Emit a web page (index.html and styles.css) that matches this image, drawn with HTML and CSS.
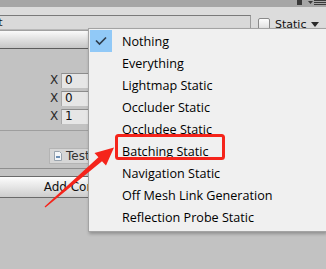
FILE: index.html
```html
<!DOCTYPE html>
<html lang="en">
<head>
    <meta charset="UTF-8">
    <title>Inspector - Static flags</title>
    <link rel="stylesheet" href="styles.css">
</head>
<body>
    <div class="inspector">
        <div class="tabbar">
            <svg class="tab-icons" width="29" height="6" viewBox="0 0 29 6">
                <rect x="0" y="0" width="5" height="5" fill="#3a3a3a"/>
                <path d="M11 1 h5 l-2.5 3 z" fill="#3a3a3a"/>
                <rect x="17" y="0" width="12" height="1" fill="#3a3a3a"/>
                <rect x="17" y="2" width="12" height="1" fill="#3a3a3a"/>
                <rect x="17" y="4" width="12" height="1" fill="#3a3a3a"/>
            </svg>
        </div>

        <div class="head">
            <div class="name-row">
                <div class="name-field">Test</div>
                <span class="checkbox"></span>
                <span class="static-label">Static</span>
                <span class="caret"></span>
            </div>
            <div class="tag-bar"></div>
        </div>

        <div class="transform">
            <div class="vec-row"><span class="axis">X</span><span class="num-field">0</span></div>
            <div class="vec-row"><span class="axis">X</span><span class="num-field">0</span></div>
            <div class="vec-row"><span class="axis">X</span><span class="num-field">1</span></div>
        </div>

        <div class="component">
            <span class="object-field">
                <svg class="script-icon" width="8" height="10" viewBox="0 0 8 10">
                    <path d="M0.5 0.5 h5 l2 2 v7 h-7 z" fill="#f4f6f8" stroke="#9aa4ae"/>
                    <rect x="2" y="5" width="4" height="2" fill="#6d8fb5"/>
                </svg>
                Test
            </span>
        </div>

        <div class="add-row">
            <button class="add-btn">Add Component</button>
        </div>
    </div>

    <!-- static flags dropdown -->
    <div class="static-menu">
        <div class="menu-item checked">
            <span class="check">
                <svg width="22" height="22" viewBox="0 0 22 22">
                    <polyline points="6,10.5 9.5,14 16,7.5" fill="none" stroke="#2e3d4c" stroke-width="1.7"/>
                </svg>
            </span>
            <span class="label">Nothing</span>
        </div>
        <div class="menu-item"><span class="check"></span><span class="label">Everything</span></div>
        <div class="menu-item"><span class="check"></span><span class="label">Lightmap Static</span></div>
        <div class="menu-item"><span class="check"></span><span class="label">Occluder Static</span></div>
        <div class="menu-item"><span class="check"></span><span class="label">Occludee Static</span></div>
        <div class="menu-item"><span class="check"></span><span class="label">Batching Static</span></div>
        <div class="menu-item"><span class="check"></span><span class="label">Navigation Static</span></div>
        <div class="menu-item"><span class="check"></span><span class="label">Off Mesh Link Generation</span></div>
        <div class="menu-item"><span class="check"></span><span class="label">Reflection Probe Static</span></div>
    </div>

    <!-- annotation -->
    <svg class="callout" width="326" height="269" viewBox="0 0 326 269">
        <rect x="116.5" y="135.5" width="107" height="23" rx="2" fill="none" stroke="#f5241b" stroke-width="3"/>
        <polygon points="44.6,206.5 98.4,157.2 94.5,153 114,147.5 106,165.5 102,161.2 45.4,207.5" fill="#f5241b"/>
    </svg>
</body>
</html>
```

FILE: styles.css
```css
body {
    margin: 0;
    width: 326px;
    height: 269px;
    overflow: hidden;
    position: relative;
    background: #c2c2c2;
    font-family: "DejaVu Sans", sans-serif;
    color: #111;
}
.tabbar {
    height: 7px;
    background: #a6a6a6;
    display: flex;
    justify-content: flex-end;
}
.tab-icons {
    display: block;
}
.head {
    background: #dcdcdc;
    padding-top: 8px;
}
.name-row {
    display: flex;
    align-items: center;
    height: 15px;
}
.name-field {
    box-sizing: border-box;
    width: 273px;
    height: 15px;
    margin-left: -22px;
    padding-left: 3px;
    background: #d9d9d9;
    border-top: 1px solid #7a7a7a;
    border-right: 1px solid #9c9c9c;
    border-bottom: 1px solid #b8b8b8;
    font-size: 11px;
    line-height: 13px;
    white-space: nowrap;
}
.checkbox {
    box-sizing: border-box;
    width: 12px;
    height: 12px;
    margin-left: 7px;
    margin-top: 3px;
    border: 1px solid #8a8a8a;
    border-radius: 2px;
    background: linear-gradient(#fdfdfd, #dedede);
}
.static-label {
    margin-left: 5px;
    font-size: 11px;
    line-height: 13px;
    margin-top: 4px;
}
.caret {
    margin-left: 5px;
    margin-top: 3px;
    width: 0;
    height: 0;
    border-left: 4.5px solid transparent;
    border-right: 4.5px solid transparent;
    border-top: 5px solid #2a2a2a;
}
.tag-bar {
    height: 17px;
    border-top: 1px solid #a0a0a0;
    border-bottom: 1px solid #5c5c5c;
    background: linear-gradient(#fafafa, #c6c6c6);
}
.transform {
    padding: 24px 0 6px 50px;
    display: flex;
    flex-direction: column;
    gap: 3px;
    border-bottom: 1px solid #9e9e9e;
}
.vec-row {
    display: flex;
    height: 15px;
    font-size: 12px;
    line-height: 15px;
}
.axis {
    width: 11px;
    color: #2a2a2a;
}
.num-field {
    box-sizing: border-box;
    width: 40px;
    padding-left: 3px;
    background: #e6e6e6;
    border-top: 1px solid #8c8c8c;
    border-left: 1px solid #a8a8a8;
    line-height: 13px;
}
.component {
    padding: 17px 0 4px 49px;
    border-bottom: 1px solid #8e8e8e;
}
.object-field {
    box-sizing: border-box;
    display: flex;
    align-items: center;
    gap: 4px;
    width: 50px;
    height: 16px;
    padding-left: 4px;
    background: #d6d6d6;
    border: 1px solid #b4b4b4;
    font-size: 12px;
    color: #333;
}
.script-icon {
    display: block;
}
.add-row {
    padding-top: 7px;
}
.add-btn {
    display: block;
    box-sizing: border-box;
    width: 244px;
    height: 22px;
    margin-left: -30px;
    padding: 0;
    border: 1px solid #6a6a6a;
    border-radius: 3px;
    background: linear-gradient(#fdfdfd, #cdcdcd);
    font-family: "DejaVu Sans", sans-serif;
    font-size: 12px;
    color: #111;
}

/* dropdown menu */
.static-menu {
    position: absolute;
    left: 88px;
    top: 28px;
    width: 236px;
    padding: 1px 0 3px 1px;
    background: #f0f0f0;
    border: 1px solid #a3a3a3;
    border-right: none;
    box-shadow: 1px 2px 3px rgba(0, 0, 0, 0.25);
    font-family: "Open Sans", sans-serif;
    font-size: 12.6px;
    color: #000;
}
.menu-item {
    display: flex;
    align-items: center;
    height: 22px;
}
.check {
    width: 22px;
    height: 22px;
}
.check svg {
    display: block;
}
.menu-item.checked .check {
    background: #91c9f7;
}
.label {
    padding-left: 10px;
    white-space: nowrap;
}
.callout {
    position: absolute;
    left: 0;
    top: 0;
    pointer-events: none;
}
```
